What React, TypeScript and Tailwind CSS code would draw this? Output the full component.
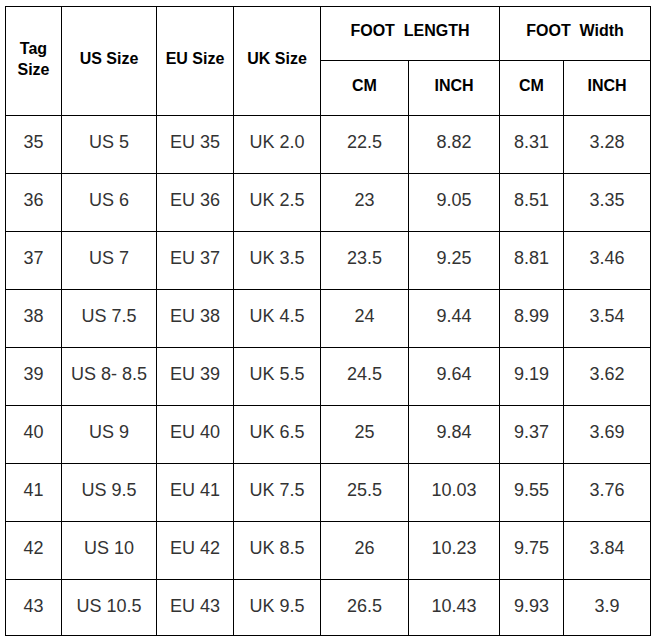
import React from "react";

const rows: string[][] = [
  ["35", "US 5", "EU 35", "UK 2.0", "22.5", "8.82", "8.31", "3.28"],
  ["36", "US 6", "EU 36", "UK 2.5", "23", "9.05", "8.51", "3.35"],
  ["37", "US 7", "EU 37", "UK 3.5", "23.5", "9.25", "8.81", "3.46"],
  ["38", "US 7.5", "EU 38", "UK 4.5", "24", "9.44", "8.99", "3.54"],
  ["39", "US 8- 8.5", "EU 39", "UK 5.5", "24.5", "9.64", "9.19", "3.62"],
  ["40", "US 9", "EU 40", "UK 6.5", "25", "9.84", "9.37", "3.69"],
  ["41", "US 9.5", "EU 41", "UK 7.5", "25.5", "10.03", "9.55", "3.76"],
  ["42", "US 10", "EU 42", "UK 8.5", "26", "10.23", "9.75", "3.84"],
  ["43", "US 10.5", "EU 43", "UK 9.5", "26.5", "10.43", "9.93", "3.9"],
];

const widths = [56, 95, 77, 87, 88, 91, 64, 87];

export default function App() {
  const th =
    "border border-black font-bold text-[16px] text-black text-center align-middle p-0 pb-[5px]";
  return (
    <div
      className="w-[655px] h-[642px] bg-white pl-[5px] pt-[6px]"
      style={{ fontFamily: '"Liberation Sans", Arial, sans-serif' }}
    >
      <table className="border-collapse table-fixed w-[645px]">
        <colgroup>
          {widths.map((w, i) => (
            <col key={i} style={{ width: w }} />
          ))}
        </colgroup>
        <thead>
          <tr className="h-[54px]">
            <th rowSpan={2} className={th + " leading-[21px]"}>
              Tag
              <br />
              Size
            </th>
            <th rowSpan={2} className={th}>US Size</th>
            <th rowSpan={2} className={th}>EU Size</th>
            <th rowSpan={2} className={th}>UK Size</th>
            <th colSpan={2} className={th + " whitespace-pre"}>{"FOOT  LENGTH"}</th>
            <th colSpan={2} className={th + " whitespace-pre"}>{"FOOT  Width"}</th>
          </tr>
          <tr className="h-[55px]">
            <th className={th}>CM</th>
            <th className={th}>INCH</th>
            <th className={th}>CM</th>
            <th className={th}>INCH</th>
          </tr>
        </thead>
        <tbody>
          {rows.map((r, i) => {
            const last = i === rows.length - 1;
            return (
              <tr key={i} className={last ? "h-[56px]" : "h-[58px]"}>
                {r.map((c, j) => (
                  <td
                    key={j}
                    className={
                      "border border-black text-center align-middle text-[18px] text-[#333] p-0 whitespace-nowrap " +
                      (last ? "pb-[3px]" : "pb-[5px]")
                    }
                  >
                    {c}
                  </td>
                ))}
              </tr>
            );
          })}
        </tbody>
      </table>
    </div>
  );
}
